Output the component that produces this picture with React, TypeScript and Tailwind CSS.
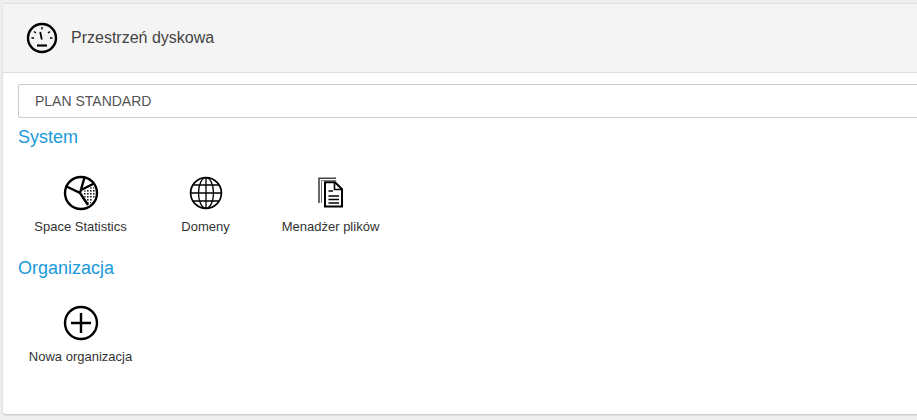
import React from "react";

const GaugeIcon = () => (
  <svg width="32" height="32" viewBox="0 0 32 32" fill="none" stroke="#000" strokeWidth="2.4">
    <circle cx="16" cy="16" r="14" />
    <path d="M16 5v2.5M8 9.5l2 1.5M24 9.5l-2 1.5M5.5 16h2.5M24 16h2.5" strokeWidth="1.4" />
    <path d="M14.2 10l1.6 7.5" strokeWidth="1.8" />
    <path d="M11 23.5h10" strokeWidth="2.2" />
  </svg>
);

const PieIcon = () => (
  <svg width="36" height="36" viewBox="0 0 36 36" fill="none" stroke="#000" strokeWidth="2.4">
    <defs>
      <pattern id="dots" width="3" height="3" patternUnits="userSpaceOnUse">
        <rect width="1.6" height="1.6" fill="#222" stroke="none" />
      </pattern>
    </defs>
    <circle cx="18" cy="18" r="16" />
    <path d="M19 17L30 11L33.5 19L27 29L25 29Z" fill="url(#dots)" stroke="none" />
    <path d="M2.5 11L17 18L25 30M17 18L21.5 2.5M18 15L30 9" />
  </svg>
);

const GlobeIcon = () => (
  <svg width="34" height="34" viewBox="0 0 34 34" fill="none" stroke="#000" strokeWidth="1.3">
    <circle cx="17" cy="17" r="15.4" strokeWidth="1.7" />
    <ellipse cx="17" cy="17" rx="7.5" ry="15.4" />
    <path d="M17 1.6v30.8M1.6 17h30.8M4 9h26M4 25h26" />
  </svg>
);

const FilesIcon = () => (
  <svg width="26" height="32" viewBox="0 0 26 32" fill="none" stroke="#000">
    <path d="M1 26V1.2h17" strokeWidth="1.6" stroke="#444" />
    <path d="M3.5 26V3.5h15" strokeWidth="1" stroke="#777" />
    <path d="M7 5.2H17l7 7V29.5H7Z" fill="#fff" strokeWidth="2" />
    <path d="M16.5 5V12.5H24" strokeWidth="1.6" />
    <path d="M10.5 14h4.5M10.5 19h10.5M10.5 22.5h10.5M10.5 26h10.5" strokeWidth="1.4" />
  </svg>
);

const PlusIcon = () => (
  <svg width="36" height="36" viewBox="0 0 36 36" fill="none" stroke="#000" strokeWidth="2.4">
    <circle cx="18" cy="18" r="16" />
    <path d="M18 8v20M8 18h20" />
  </svg>
);

const Tile = ({ icon, label }: { icon: React.ReactNode; label: string }) => (
  <div className="flex w-[125px] flex-col items-center">
    <div className="flex h-9 items-center justify-center">{icon}</div>
    <span className="mt-[7px] text-[13px] leading-[18px] whitespace-nowrap text-[#333]">{label}</span>
  </div>
);

export default function App() {
  return (
    <div className="h-[420px] w-[917px] overflow-hidden bg-[#eeeeee] pt-[3px] pl-[3px] font-['Liberation_Sans',Arial,sans-serif]">
      <div className="h-[411px] w-[1000px] rounded-[3px] border-t border-[#e0e0e0] bg-white shadow-[0_1px_2px_rgba(0,0,0,0.2)]">
        <div className="flex h-[69px] items-center border-b border-[#dddddd] bg-[#f4f4f4] pl-[23px]">
          <GaugeIcon />
          <span className="ml-[13px] text-base text-[#444]">Przestrzeń dyskowa</span>
        </div>
        <div className="px-[15px] pt-[11px]">
          <div className="flex h-[34px] w-[1000px] items-center rounded-[2px] border border-[#cccccc] pl-4 text-sm text-[#555]">
            PLAN STANDARD
          </div>
          <h2 className="mt-[7px] text-[18px] leading-[24px] text-[#1a9ad9]">System</h2>
          <div className="mt-[26px] flex">
            <Tile icon={<PieIcon />} label="Space Statistics" />
            <Tile icon={<GlobeIcon />} label="Domeny" />
            <Tile icon={<FilesIcon />} label="Menadżer plików" />
          </div>
          <h2 className="mt-[20px] text-[18px] leading-[24px] text-[#1a9ad9]">Organizacja</h2>
          <div className="mt-[25px] flex">
            <Tile icon={<PlusIcon />} label="Nowa organizacja" />
          </div>
        </div>
      </div>
    </div>
  );
}
